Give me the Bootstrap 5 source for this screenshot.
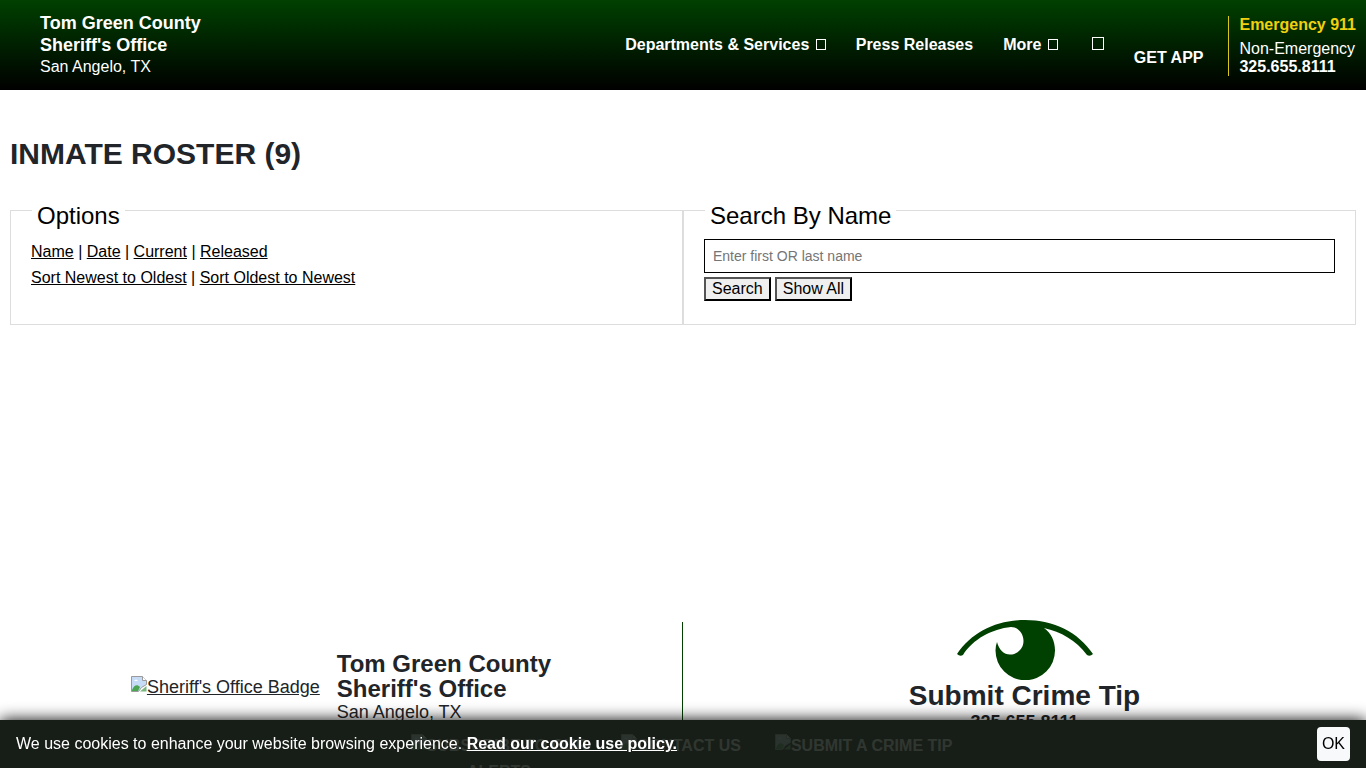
<!DOCTYPE html>
<html lang="en">
<head>
<meta charset="utf-8">
<meta name="viewport" content="width=device-width, initial-scale=1">
<title>Inmate Roster - Tom Green County Sheriff's Office</title>
<link href="https://cdn.jsdelivr.net/npm/bootstrap@5.3.0/dist/css/bootstrap.min.css" rel="stylesheet">
<style>
body { font-family: "Liberation Sans", Arial, sans-serif; font-size: 16px; color: #212529; }
a { color: inherit; }
.site-header { min-height: 90px; background: linear-gradient(#004000, #000); }
.brand { margin-left: 40px; line-height: 22px; }
.brand strong { display: block; font-size: 18px; line-height: 22px; }
.site-header .nav { gap: 30px; margin-right: 30px; }
.glyph-box { display: inline-block; width: 10px; height: 11px; border: 1px solid currentColor; margin-left: 2px; }
.glyph-box-lg { width: 12px; height: 13px; margin: 0; }
.get-app { margin: 26px 25px 0 0; }
.emergency { border-left: 1px solid #d8c81a; padding: 0 10px; height: 60px; line-height: 18px; margin-top: 2px; }
.emergency-title { color: #f0d010; margin-bottom: 6px; }
.content { padding: 0 10px; }
.page-title { font-size: 30px; line-height: 36px; font-weight: 700; margin: 46px 0 19px; }
.panel { border: 1px solid #ddd; padding: 9px 20px 23px; line-height: 26px; color: #000; flex: 1 1 0; }
.panel legend { float: none; width: auto; font-size: 24px; line-height: 28px; padding: 11px 5px 0; margin: 0 1px; }
.search-box { height: 34px; border: 1px solid #000; padding: 0 8px; font-size: 14px; margin: 0 0 4px; }
.search-box::placeholder { color: #757575; }
.plain-btn { border: 2px outset #000; background: #efefef; line-height: 20px; padding: 0 6px; color: #000; }
.site-footer { margin-top: 297px; }
.office { border-right: 1px solid #004000; min-height: 130px; font-size: 18px; line-height: 22px; gap: 17px; }
.office strong { display: block; font-size: 24px; line-height: 25px; }
.tip { font-size: 18px; line-height: 22px; min-height: 130px; margin-top: -2px; }
.tip-title { font-size: 28px; line-height: 31px; }
.quick-links { z-index: 10; height: 48px; overflow: hidden; background: #000; color: #fff; gap: 34px; padding: 13px 3px 0 0; line-height: 26px; }
.quick-links svg { vertical-align: 1px; }
.cookie-bar { z-index: 20; height: 48px; padding: 0 16px; background: rgba(25, 32, 25, .9); color: #fff; box-shadow: 0 0 16px #000; }
.ok-btn { background: #f8f9fa; color: #000; border: 0; border-radius: 4px; height: 34px; padding: 0 5px; }
</style>
</head>
<body>
<svg class="d-none" aria-hidden="true">
  <symbol id="broken" viewBox="0 0 16 16">
    <path d="M.5 .5h11l4 4v4l-5 3-3 4h-7z" fill="#c6dbf5" stroke="#9a9a9a"/>
    <path d="M11.500 .5v4h4" fill="#fff" stroke="#9a9a9a"/>
    <path d="M1 14c2-5 5-6 8-3l-2 4H1z" fill="#4aa653"/>
    <path d="M3 5q2-3 4 0z" fill="#fff"/>
    <path d="M15.500 10v5.500H9z" fill="#7ab67d"/>
  </symbol>
</svg>

<header class="site-header d-flex align-items-center text-white">
  <div class="brand"><strong>Tom Green County<br>Sheriff's Office</strong>San Angelo, TX</div>
  <nav class="nav ms-auto fw-bold align-items-center" aria-label="Main">
    <a class="text-decoration-none" href="#">Departments &amp; Services <span class="glyph-box"></span></a>
    <a class="text-decoration-none" href="#">Press Releases</a>
    <a class="text-decoration-none" href="#">More <span class="glyph-box"></span></a>
    <a class="text-decoration-none ms-1" href="#" aria-label="Search"><span class="glyph-box glyph-box-lg"></span></a>
  </nav>
  <a class="get-app fw-bold text-decoration-none" href="#">GET APP</a>
  <div class="emergency">
    <div class="emergency-title fw-bold">Emergency 911</div>
    <div>Non-Emergency</div>
    <strong class="d-block">325.655.8111</strong>
  </div>
</header>

<main class="content">
  <h1 class="page-title text-uppercase">Inmate Roster (9)</h1>
  <div class="d-flex">
    <fieldset class="panel">
      <legend>Options</legend>
      <div><a href="#">Name</a> | <a href="#">Date</a> | <a href="#">Current</a> | <a href="#">Released</a></div>
      <div><a href="#">Sort Newest to Oldest</a> | <a href="#">Sort Oldest to Newest</a></div>
    </fieldset>
    <fieldset class="panel">
      <legend>Search By Name</legend>
      <input class="search-box d-block w-100" type="text" aria-label="Search by name" placeholder="Enter first OR last name">
      <div class="d-flex gap-1">
        <button class="plain-btn" type="button">Search</button>
        <button class="plain-btn" type="button">Show All</button>
      </div>
    </fieldset>
  </div>
</main>

<footer class="site-footer row g-0">
  <div class="office col-6 d-flex align-items-center justify-content-center">
    <a href="#" class="d-flex"><svg width="16" height="16" aria-hidden="true"><use href="#broken"/></svg>Sheriff's Office Badge</a>
    <div><strong>Tom Green County<br>Sheriff's Office</strong>San Angelo, TX</div>
  </div>
  <div class="tip col-6 text-center fw-bold">
    <svg class="d-block mx-auto" width="136" height="60" viewBox="0 0 136 60" fill="#004000" aria-hidden="true">
      <path d="M0 34C15 12 39 0 68 0S121 12 136 34q-3 3-6 1C119 20 104 12 87 8C94 13 98 21 98 30.500A29.600 29.600 0 0 1 38.500 30.500Q38.500 26 40 22C42 30 47 34.500 53 34.500C60 34.500 66.500 29 66.500 21C66.500 12 60 7 54 7C35 9 16 19 6 35q-3 2-6-1z"/>
    </svg>
    <div class="tip-title">Submit Crime Tip</div>
    <div>325.655.8111</div>
  </div>
</footer>

<nav class="quick-links fixed-bottom d-flex justify-content-center text-center fw-bold" aria-label="Quick links">
  <a class="text-decoration-none" href="#"><svg width="16" height="16" aria-hidden="true"><use href="#broken"/></svg>SUBSCRIBE TO OUR<br>ALERTS</a>
  <a class="text-decoration-none" href="#"><svg width="16" height="16" aria-hidden="true"><use href="#broken"/></svg>CONTACT US</a>
  <a class="text-decoration-none" href="#"><svg width="16" height="16" aria-hidden="true"><use href="#broken"/></svg>SUBMIT A CRIME TIP</a>
</nav>

<div class="cookie-bar fixed-bottom d-flex align-items-center justify-content-between">
  <div>We use cookies to enhance your website browsing experience. <a class="fw-bold" href="#">Read our cookie use policy.</a></div>
  <button class="ok-btn" type="button">OK</button>
</div>
<script src="https://cdn.jsdelivr.net/npm/bootstrap@5.3.0/dist/js/bootstrap.bundle.min.js"></script>
</body>
</html>
